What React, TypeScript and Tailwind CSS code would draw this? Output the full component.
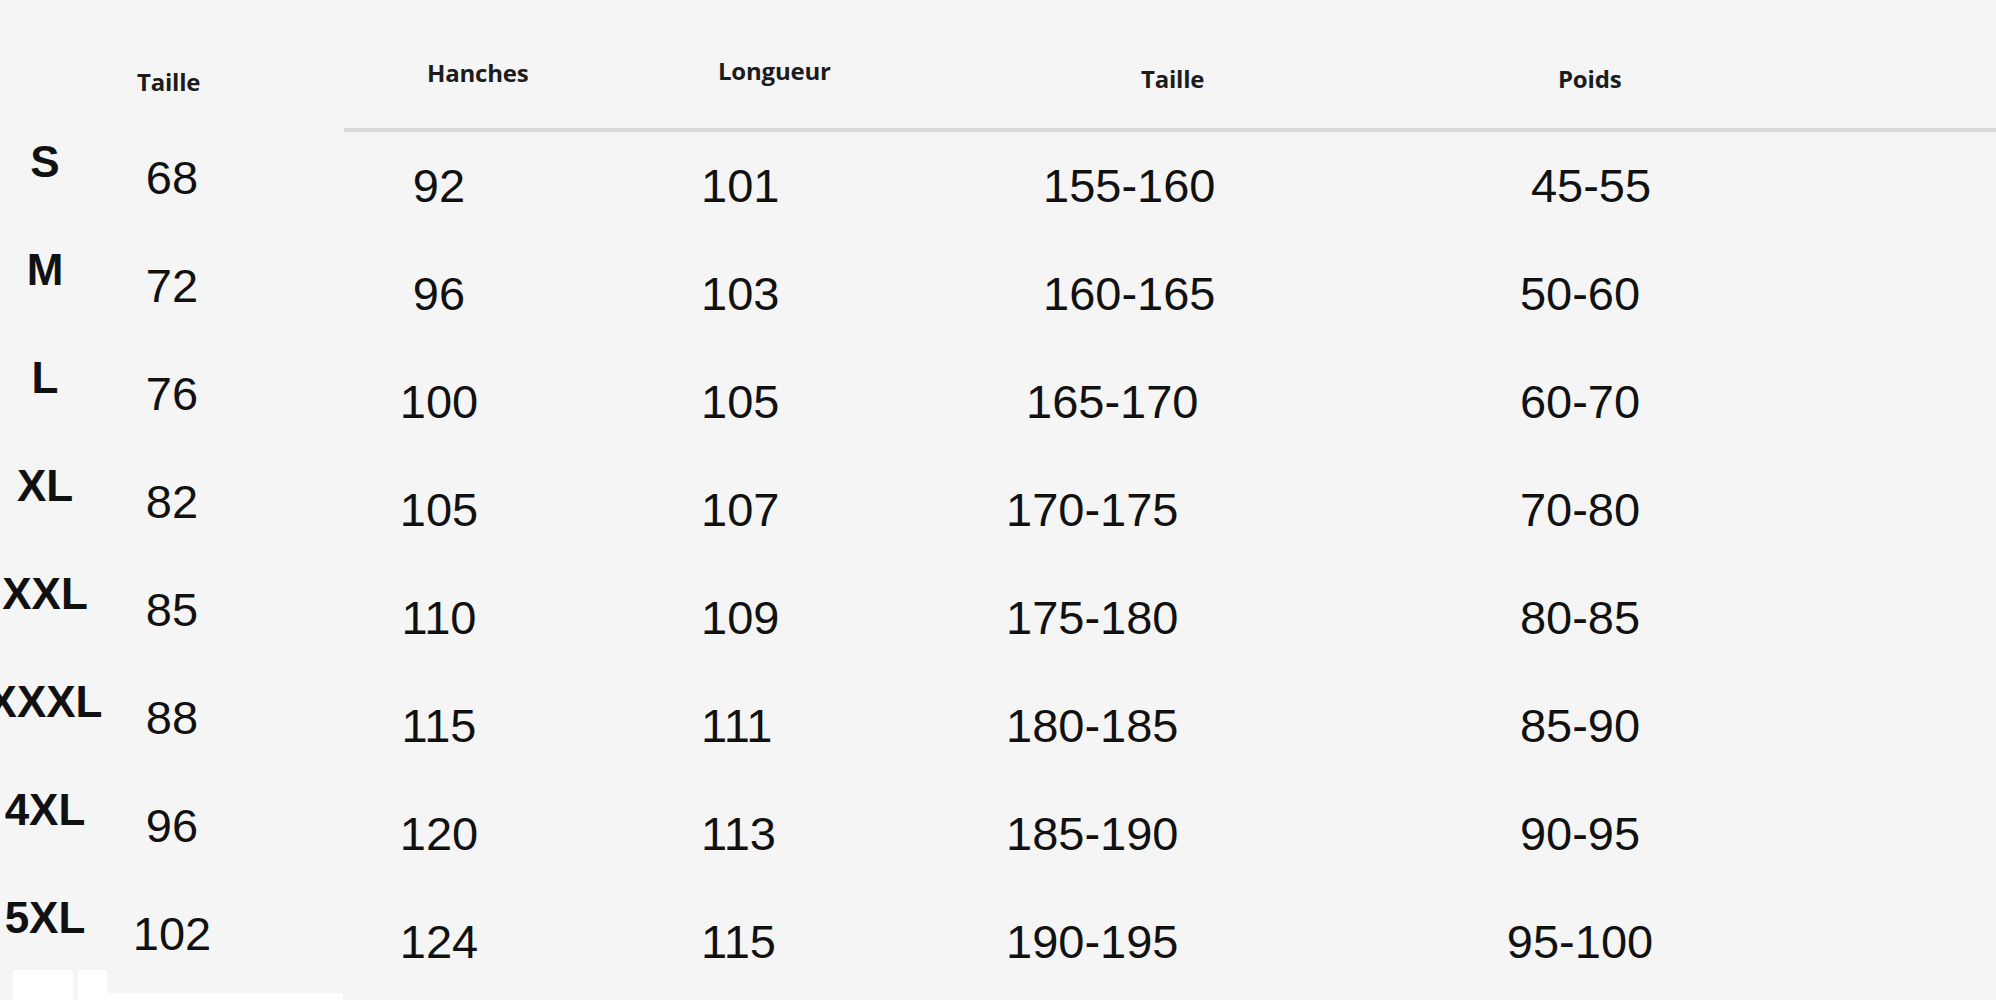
import React from 'react';

// --- Data ---
interface SizeRow {
  size: string;
  taille: string;
  hanches: string;
  longueur: string;
  hauteur: string;
  poids: string;
  hauteurPad: string;
  poidsPad: string;
  rowHeight: string;
}

const rows: SizeRow[] = [
  { size: 'S', taille: '68', hanches: '92', longueur: '101', hauteur: '155-160', poids: '45-55', hauteurPad: 'pl-[43px]', poidsPad: 'pl-[22px]', rowHeight: 'h-[108px]' },
  { size: 'M', taille: '72', hanches: '96', longueur: '103', hauteur: '160-165', poids: '50-60', hauteurPad: 'pl-[43px]', poidsPad: 'pl-0', rowHeight: 'h-[108px]' },
  { size: 'L', taille: '76', hanches: '100', longueur: '105', hauteur: '165-170', poids: '60-70', hauteurPad: 'pl-[26px]', poidsPad: 'pl-0', rowHeight: 'h-[108px]' },
  { size: 'XL', taille: '82', hanches: '105', longueur: '107', hauteur: '170-175', poids: '70-80', hauteurPad: 'pl-[6px]', poidsPad: 'pl-0', rowHeight: 'h-[108px]' },
  { size: 'XXL', taille: '85', hanches: '110', longueur: '109', hauteur: '175-180', poids: '80-85', hauteurPad: 'pl-[6px]', poidsPad: 'pl-0', rowHeight: 'h-[108px]' },
  { size: 'XXXL', taille: '88', hanches: '115', longueur: '111', hauteur: '180-185', poids: '85-90', hauteurPad: 'pl-[6px]', poidsPad: 'pl-0', rowHeight: 'h-[108px]' },
  { size: '4XL', taille: '96', hanches: '120', longueur: '113', hauteur: '185-190', poids: '90-95', hauteurPad: 'pl-[6px]', poidsPad: 'pl-0', rowHeight: 'h-[108px]' },
  { size: '5XL', taille: '102', hanches: '124', longueur: '115', hauteur: '190-195', poids: '95-100', hauteurPad: 'pl-[6px]', poidsPad: 'pl-0', rowHeight: 'h-[82px]' },
];

const headFont = "font-['Open_Sans',sans-serif] font-bold text-[24px] leading-[24px] text-[#1c1c1c] tracking-[-0.2px]";
const valueFont = "font-['Liberation_Sans',Arial,sans-serif] text-[47px] leading-[48px] text-[#111]";

function App() {
  return (
    <div className="w-[1996px] h-[1000px] bg-[#f5f5f5] overflow-hidden flex flex-col">
      {/* --- Header --- */}
      <div className="h-[128px] flex shrink-0">
        <div className="w-[137px] shrink-0" />
        <div className={`w-[290px] shrink-0 pt-[70px] ${headFont}`}>Taille</div>
        <div className={`w-[291px] shrink-0 pt-[61px] ${headFont}`}>Hanches</div>
        <div className={`w-[423px] shrink-0 pt-[59px] ${headFont}`}>Longueur</div>
        <div className={`w-[417px] shrink-0 pt-[67px] ${headFont}`}>Taille</div>
        <div className={`w-[200px] shrink-0 pt-[67px] ${headFont}`}>Poids</div>
      </div>
      <div className="ml-[344px] h-[4px] bg-[#d9d9d9] shrink-0" />

      {/* --- Rows --- */}
      {rows.map((r) => (
        <div key={r.size} className={`${r.rowHeight} flex shrink-0`}>
          <div className="w-[90px] shrink-0 flex justify-center pt-[8px]">
            <span className="font-['Liberation_Sans',Arial,sans-serif] font-bold text-[44px] leading-[44px] text-[#111] whitespace-nowrap">
              {r.size}
            </span>
          </div>
          <div className={`w-[164px] shrink-0 flex justify-center pt-[22px] ${valueFont}`}>{r.taille}</div>
          <div className={`w-[370px] shrink-0 flex justify-center pt-[30px] ${valueFont}`}>{r.hanches}</div>
          <div className={`w-[376px] shrink-0 pl-[77px] pt-[30px] ${valueFont}`}>{r.longueur}</div>
          <div className={`w-[400px] shrink-0 pt-[30px] ${r.hauteurPad} ${valueFont}`}>{r.hauteur}</div>
          <div className={`w-[360px] shrink-0 flex justify-center pt-[30px] ${r.poidsPad} ${valueFont}`}>{r.poids}</div>
        </div>
      ))}

      {/* --- Bottom strip --- */}
      <div className="h-[30px] flex items-end shrink-0">
        <div className="ml-[13px] w-[60px] h-[30px] bg-white" />
        <div className="ml-[5px] w-[29px] h-[30px] bg-white" />
        <div className="w-[236px] h-[7px] bg-white" />
      </div>
    </div>
  );
}

export default App;
